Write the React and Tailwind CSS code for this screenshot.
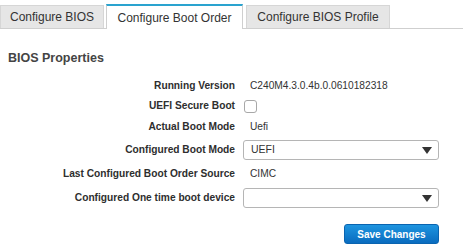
import React from "react";

const font = { fontFamily: '"Liberation Sans", Arial, Helvetica, sans-serif' };

function Arrow() {
  return (
    <svg width="10" height="7" viewBox="0 0 10 7" className="absolute right-[6px] top-[6px]">
      <polygon points="0,0 10,0 5,7" fill="#333" />
    </svg>
  );
}

function Select({ value }) {
  return (
    <div className="relative w-[196px] h-[20px] border border-[#b5b5b5] rounded-[3px] bg-white flex items-center pl-[7px] text-[10.5px] text-[#333]">
      {value}
      <Arrow />
    </div>
  );
}

const rows = [
  { label: "Running Version", h: "h-[20px]", kind: "text", value: "C240M4.3.0.4b.0.0610182318" },
  { label: "UEFI Secure Boot", h: "h-[20px]", kind: "check" },
  { label: "Actual Boot Mode", h: "h-[21px]", kind: "text", value: "Uefi" },
  { label: "Configured Boot Mode", h: "h-[25px]", kind: "select", value: "UEFI" },
  { label: "Last Configured Boot Order Source", h: "h-[24px]", kind: "text", value: "CIMC" },
  { label: "Configured One time boot device", h: "h-[24px]", kind: "select", value: "" },
];

export default function App() {
  return (
    <div className="w-[463px] h-[249px] bg-white overflow-hidden" style={font}>
      <div className="pt-[4px] flex items-end gap-[2px] border-b border-[#cfcfcf] h-[29px]">
        <div className="w-[104px] h-[23px] bg-[#e6e6e6] border border-b-0 border-[#d6d6d6] flex items-center justify-center text-[12px] text-[#333]">
          Configure BIOS
        </div>
        <div className="w-[137px] h-[25px] bg-white border-t-2 border-t-[#2aa3cf] border-x border-x-[#cfcfcf] flex items-center justify-center text-[12px] text-[#333] mb-[-1px]">
          Configure Boot Order
        </div>
        <div className="ml-[1px] w-[144px] h-[23px] bg-[#e6e6e6] border border-b-0 border-[#d6d6d6] flex items-center justify-center text-[12px] text-[#333]">
          Configure BIOS Profile
        </div>
      </div>
      <div className="pl-[8px] pt-[21px] h-[47px]">
        <div className="text-[12.5px] font-bold text-[#444] leading-[16px]">BIOS Properties</div>
      </div>
      <div className="grid grid-cols-[235px_1fr] gap-x-[8px]">
        {rows.map((r) => (
          <React.Fragment key={r.label}>
            <div className={`${r.h} flex items-center justify-end text-[10.2px] font-bold text-[#2e2e2e]`}>{r.label}</div>
            <div className={`${r.h} flex items-center text-[10.2px] text-[#333]`}>
              {r.kind === "text" && <span className="pl-[7px]">{r.value}</span>}
              {r.kind === "check" && (
                <div className="ml-[1px] w-[13px] h-[13px] border border-[#a8a8a8] rounded-[3px] bg-white" />
              )}
              {r.kind === "select" && <Select value={r.value} />}
            </div>
          </React.Fragment>
        ))}
      </div>
      <div className="flex justify-end pr-[24px] pt-[14px]">
        <button className="w-[95px] h-[20px] rounded-[3px] bg-gradient-to-b from-[#1e95e0] to-[#0a6cbf] border border-[#0a64b0] text-white text-[10px] font-bold flex items-center justify-center">
          Save Changes
        </button>
      </div>
    </div>
  );
}
